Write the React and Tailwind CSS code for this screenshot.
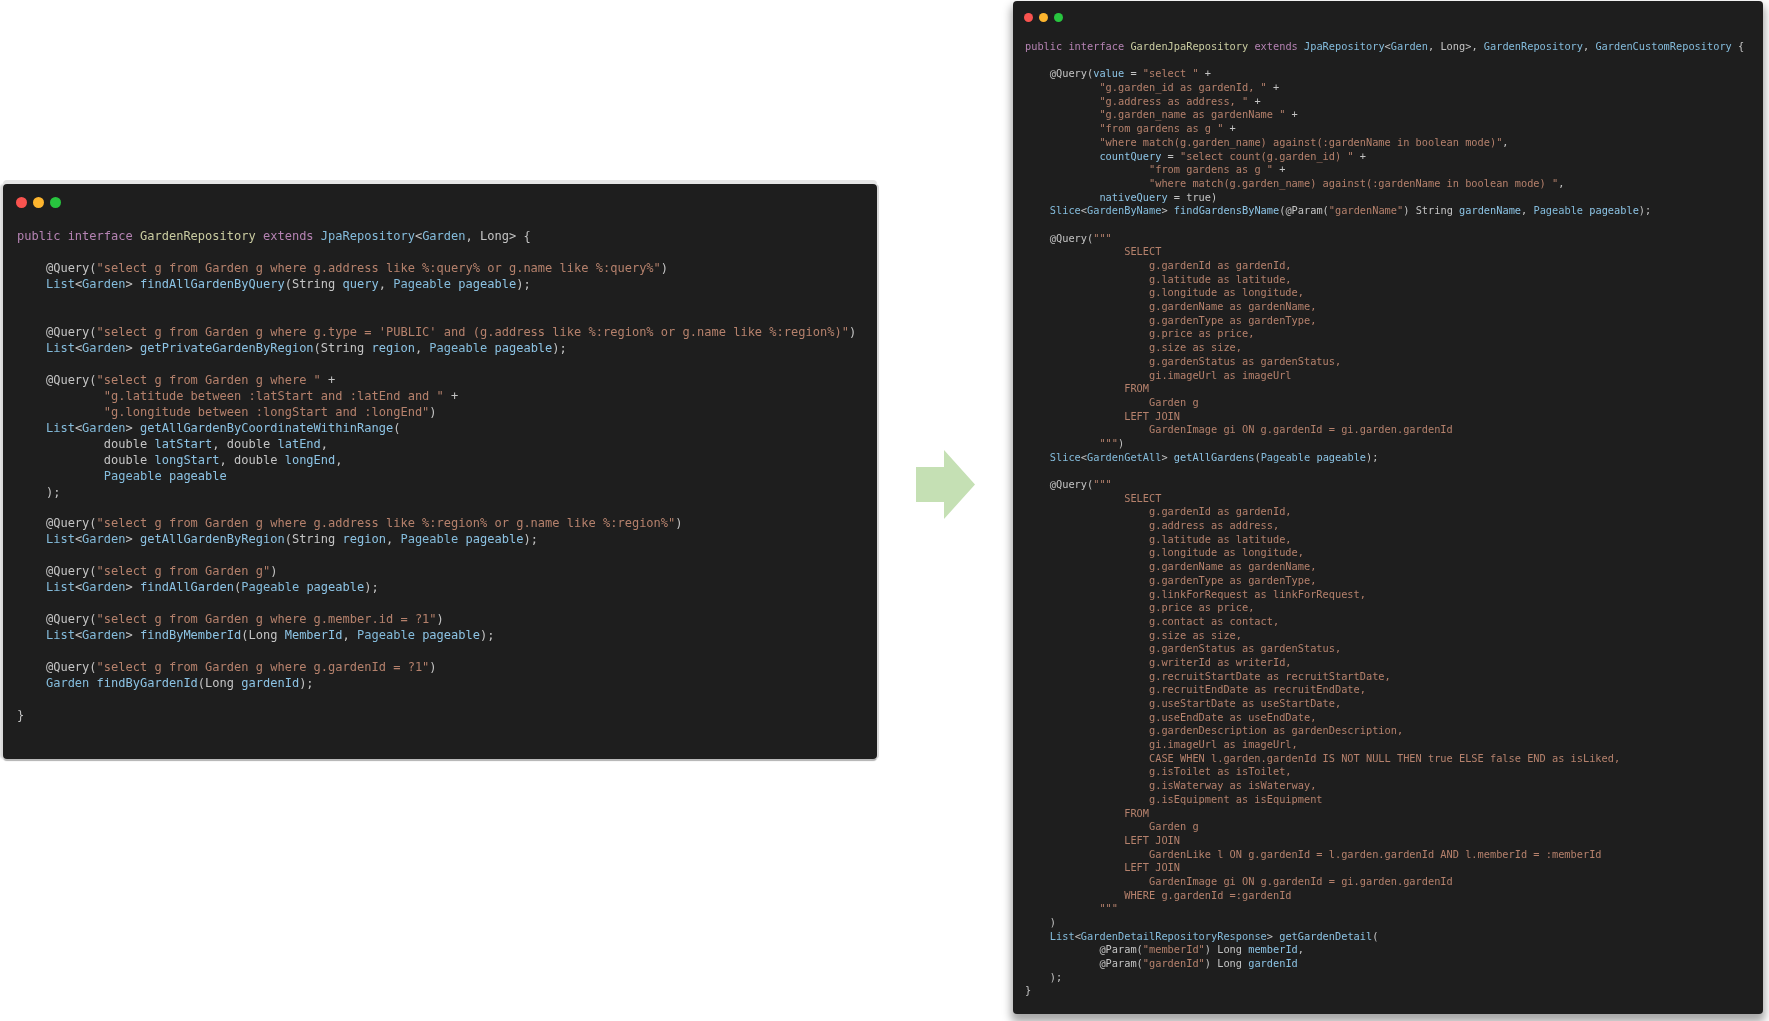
import React from 'react';

const tones = {
  k: 'text-[#b583b3]',
  c: 'text-[#c9cba0]',
  t: 'text-[#84bcdc]',
  v: 'text-[#8cc3e4]',
  s: 'text-[#b5816c]',
};

const leftCode = [
  '[k:public] [k:interface] [c:GardenRepository] [k:extends] [t:JpaRepository]<[t:Garden], Long> {',
  '',
  '    @Query([s:"select g from Garden g where g.address like %:query% or g.name like %:query%"])',
  '    [t:List]<[t:Garden]> [v:findAllGardenByQuery](String [v:query], [t:Pageable] [v:pageable]);',
  '',
  '',
  `    @Query([s:"select g from Garden g where g.type = 'PUBLIC' and (g.address like %:region% or g.name like %:region%)"])`,
  '    [t:List]<[t:Garden]> [v:getPrivateGardenByRegion](String [v:region], [t:Pageable] [v:pageable]);',
  '',
  '    @Query([s:"select g from Garden g where "] +',
  '            [s:"g.latitude between :latStart and :latEnd and "] +',
  '            [s:"g.longitude between :longStart and :longEnd"])',
  '    [t:List]<[t:Garden]> [v:getAllGardenByCoordinateWithinRange](',
  '            double [v:latStart], double [v:latEnd],',
  '            double [v:longStart], double [v:longEnd],',
  '            [t:Pageable] [v:pageable]',
  '    );',
  '',
  '    @Query([s:"select g from Garden g where g.address like %:region% or g.name like %:region%"])',
  '    [t:List]<[t:Garden]> [v:getAllGardenByRegion](String [v:region], [t:Pageable] [v:pageable]);',
  '',
  '    @Query([s:"select g from Garden g"])',
  '    [t:List]<[t:Garden]> [v:findAllGarden]([t:Pageable] [v:pageable]);',
  '',
  '    @Query([s:"select g from Garden g where g.member.id = ?1"])',
  '    [t:List]<[t:Garden]> [v:findByMemberId](Long [v:MemberId], [t:Pageable] [v:pageable]);',
  '',
  '    @Query([s:"select g from Garden g where g.gardenId = ?1"])',
  '    [t:Garden] [v:findByGardenId](Long [v:gardenId]);',
  '',
  '}',
];

const rightCode = [
  '[k:public] [k:interface] [c:GardenJpaRepository] [k:extends] [t:JpaRepository]<[t:Garden], Long>, [t:GardenRepository], [t:GardenCustomRepository] {',
  '',
  '    @Query([v:value] = [s:"select "] +',
  '            [s:"g.garden_id as gardenId, "] +',
  '            [s:"g.address as address, "] +',
  '            [s:"g.garden_name as gardenName "] +',
  '            [s:"from gardens as g "] +',
  '            [s:"where match(g.garden_name) against(:gardenName in boolean mode)"],',
  '            [v:countQuery] = [s:"select count(g.garden_id) "] +',
  '                    [s:"from gardens as g "] +',
  '                    [s:"where match(g.garden_name) against(:gardenName in boolean mode) "],',
  '            [v:nativeQuery] = true)',
  '    [t:Slice]<[t:GardenByName]> [v:findGardensByName](@Param([s:"gardenName"]) String [v:gardenName], [t:Pageable] [v:pageable]);',
  '',
  '    @Query([s:"""]',
  '[s:                SELECT]',
  '[s:                    g.gardenId as gardenId,]',
  '[s:                    g.latitude as latitude,]',
  '[s:                    g.longitude as longitude,]',
  '[s:                    g.gardenName as gardenName,]',
  '[s:                    g.gardenType as gardenType,]',
  '[s:                    g.price as price,]',
  '[s:                    g.size as size,]',
  '[s:                    g.gardenStatus as gardenStatus,]',
  '[s:                    gi.imageUrl as imageUrl]',
  '[s:                FROM]',
  '[s:                    Garden g]',
  '[s:                LEFT JOIN]',
  '[s:                    GardenImage gi ON g.gardenId = gi.garden.gardenId]',
  '[s:            """])',
  '    [t:Slice]<[t:GardenGetAll]> [v:getAllGardens]([t:Pageable] [v:pageable]);',
  '',
  '    @Query([s:"""]',
  '[s:                SELECT]',
  '[s:                    g.gardenId as gardenId,]',
  '[s:                    g.address as address,]',
  '[s:                    g.latitude as latitude,]',
  '[s:                    g.longitude as longitude,]',
  '[s:                    g.gardenName as gardenName,]',
  '[s:                    g.gardenType as gardenType,]',
  '[s:                    g.linkForRequest as linkForRequest,]',
  '[s:                    g.price as price,]',
  '[s:                    g.contact as contact,]',
  '[s:                    g.size as size,]',
  '[s:                    g.gardenStatus as gardenStatus,]',
  '[s:                    g.writerId as writerId,]',
  '[s:                    g.recruitStartDate as recruitStartDate,]',
  '[s:                    g.recruitEndDate as recruitEndDate,]',
  '[s:                    g.useStartDate as useStartDate,]',
  '[s:                    g.useEndDate as useEndDate,]',
  '[s:                    g.gardenDescription as gardenDescription,]',
  '[s:                    gi.imageUrl as imageUrl,]',
  '[s:                    CASE WHEN l.garden.gardenId IS NOT NULL THEN true ELSE false END as isLiked,]',
  '[s:                    g.isToilet as isToilet,]',
  '[s:                    g.isWaterway as isWaterway,]',
  '[s:                    g.isEquipment as isEquipment]',
  '[s:                FROM]',
  '[s:                    Garden g]',
  '[s:                LEFT JOIN]',
  '[s:                    GardenLike l ON g.gardenId = l.garden.gardenId AND l.memberId = :memberId]',
  '[s:                LEFT JOIN]',
  '[s:                    GardenImage gi ON g.gardenId = gi.garden.gardenId]',
  '[s:                WHERE g.gardenId =:gardenId]',
  '[s:            """]',
  '    )',
  '    [t:List]<[t:GardenDetailRepositoryResponse]> [v:getGardenDetail](',
  '            @Param([s:"memberId"]) Long [v:memberId],',
  '            @Param([s:"gardenId"]) Long [v:gardenId]',
  '    );',
  '}',
];

// splits "[k:word]" marks into coloured spans
const CodeLine = ({ text }) => {
  const parts = text.split(/(\[\w:[^\]]*\])/);
  return (
    <div className="h-[1lh]">
      {parts.map((part, i) => {
        const mark = part.match(/^\[(\w):([^\]]*)\]$/);
        return mark ? <span key={i} className={tones[mark[1]]}>{mark[2]}</span> : <span key={i}>{part}</span>;
      })}
    </div>
  );
};

const Dots = ({ sizeClass, gapClass }) => (
  <div className={`flex ${gapClass}`}>
    <span className={`${sizeClass} rounded-full bg-[#f9534f]`} />
    <span className={`${sizeClass} rounded-full bg-[#fdb52e]`} />
    <span className={`${sizeClass} rounded-full bg-[#28c53f]`} />
  </div>
);

const App = () => {
  return (
    <div className="flex items-start w-[1769px] h-[1021px] overflow-hidden bg-white" style={{ fontFamily: '"DejaVu Sans Mono", monospace' }}>
      {/* Before */}
      <div className="ml-[3px] mt-[184px] w-[874px] h-[575px] shrink-0 rounded-[4px] bg-[#1e1e1e] pl-[14px] pt-[13px] shadow-[0_-4px_0_0_#e6e6e6,2px_0_0_0_#d8d8d8,-3px_0_2px_0_#d8d8d8,0_2px_1px_0_#b0b0b0]">
        <Dots sizeClass="w-[11px] h-[11px]" gapClass="gap-[6px] ml-[-1px]" />
        <div className="mt-[21px] text-[12.02px] leading-[15.97px] whitespace-pre text-[#c4c4c4] blur-[0.35px]">
          {leftCode.map((line, i) => <CodeLine key={i} text={line} />)}
        </div>
      </div>

      {/* Arrow */}
      <svg className="ml-[39px] mt-[450px] shrink-0" width="59" height="69" viewBox="0 0 59 69">
        <path d="M0 17H28V0L59 34.5L28 69V52H0Z" fill="#c5e0b4" />
      </svg>

      {/* After */}
      <div className="ml-[38px] mt-px w-[750px] h-[1013px] shrink-0 rounded-[4px] bg-[#1e1e1e] pl-[12px] pt-[12px] shadow-[0_6px_8px_2px_rgba(0,0,0,0.35)]">
        <Dots sizeClass="w-[9px] h-[9px]" gapClass="gap-[6px] ml-[-1px]" />
        <div className="mt-[18px] text-[10.31px] leading-[13.7px] whitespace-pre text-[#c4c4c4] blur-[0.35px]">
          {rightCode.map((line, i) => <CodeLine key={i} text={line} />)}
        </div>
      </div>
    </div>
  );
};

export default App;
